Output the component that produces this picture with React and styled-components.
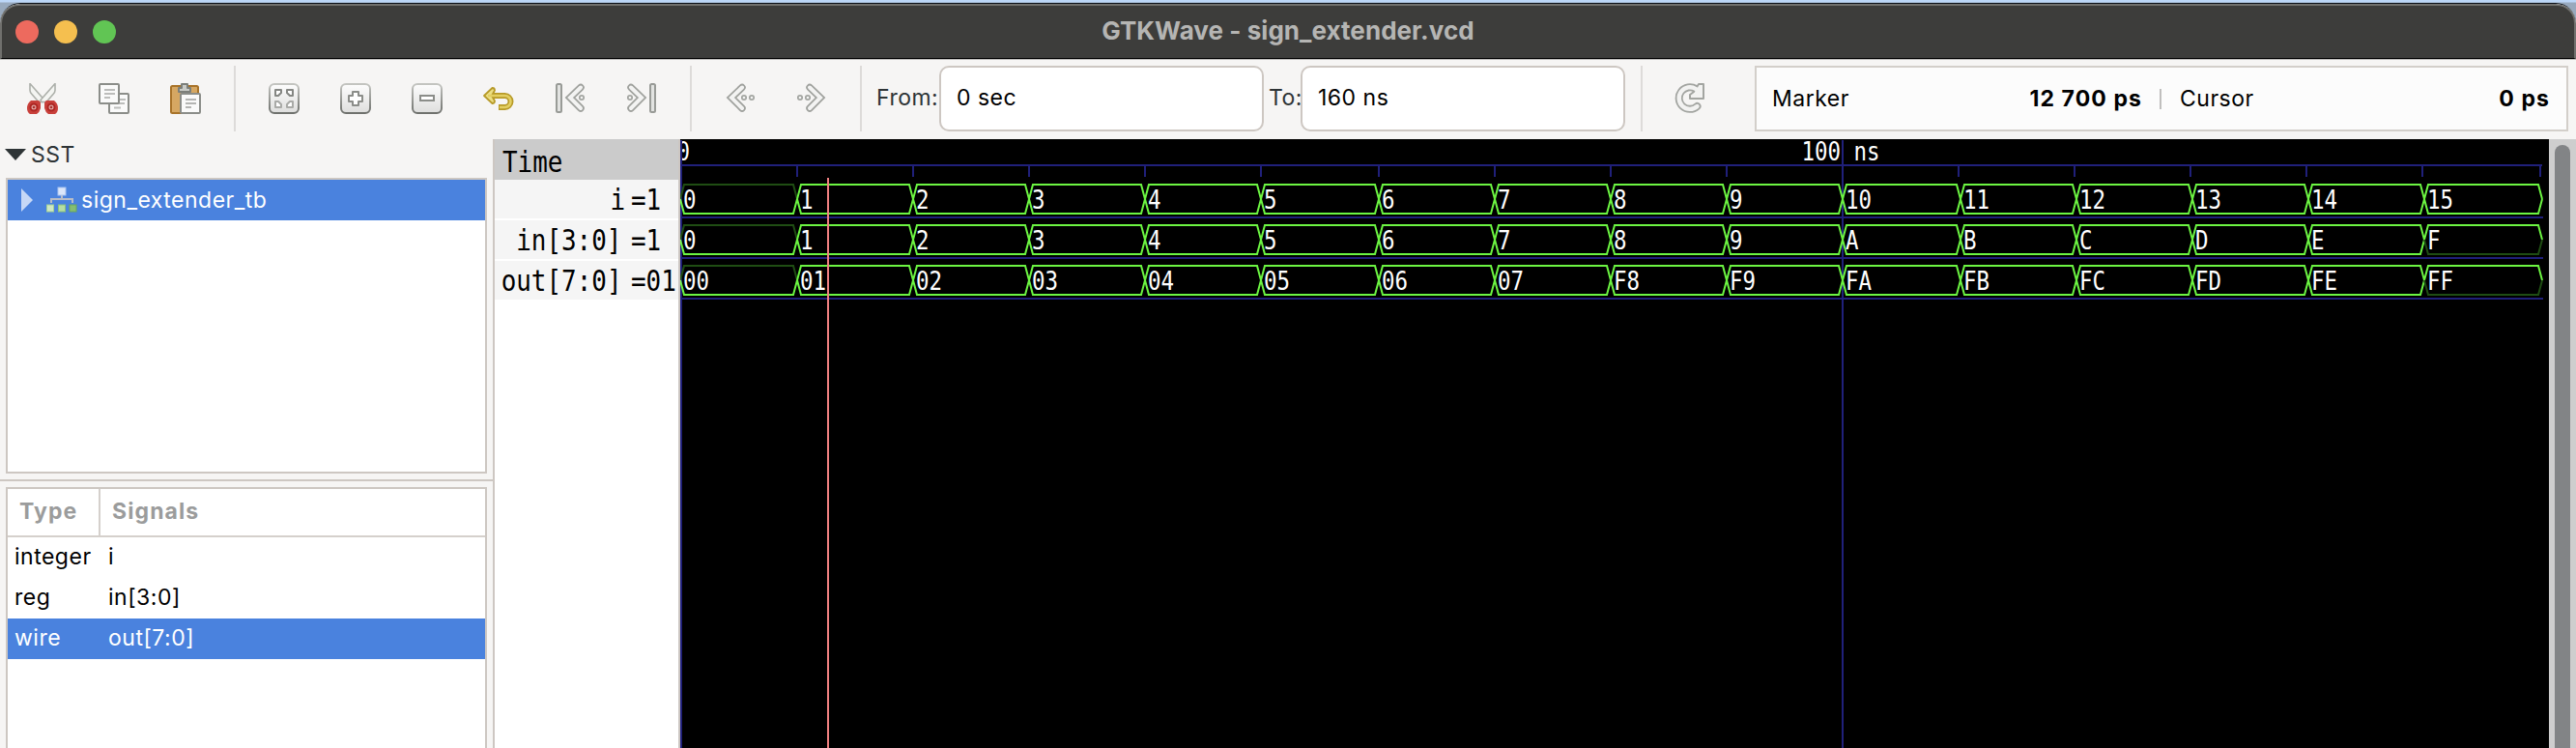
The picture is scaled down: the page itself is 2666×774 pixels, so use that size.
import React from "react";
import styled, { createGlobalStyle } from "styled-components";

const Global = createGlobalStyle`
  * { box-sizing: border-box; }
  body { margin: 0; overflow: hidden; background: #b9d2f2; }
`;

const UI = `Inter, "Open Sans", sans-serif`;
const MONO = `"DejaVu Sans Mono", monospace`;
const EDGE = "#cdc7c2";
const SQUEEZE = 0.864;

const Desktop = styled.div`
  height: 774px;
  padding-top: 3px;
  background: linear-gradient(#bcd7f8 0 2px, #98a9bd 3px);
  font-family: ${UI};
  font-size: 23px;
  letter-spacing: 0.5px;
  color: #000;
`;
const Window = styled.div`
  height: 771px;
  display: flex;
  flex-direction: column;
  background: #f6f5f4;
  border-top: 1px solid #10151c;
  border-radius: 21px 21px 0 0;
  overflow: hidden;
`;
const TitleBar = styled.header`
  height: 57px;
  flex: none;
  display: grid;
  grid-template-columns: 1fr auto 1fr;
  align-items: center;
  padding: 0 14px;
  background: #3d3d3b;
  border: 2px solid #70706d;
  border-bottom: 1px solid #000;
  border-radius: 20px 20px 0 0;
`;
const Lights = styled.div`
  display: flex;
  gap: 16px;
`;
const Light = styled.span`
  width: 24px;
  height: 24px;
  border-radius: 50%;
  background: ${(p) => p.$color};
`;
const Title = styled.h1`
  margin: 0;
  padding-bottom: 3px;
  font-size: 26px;
  line-height: 30px;
  font-weight: 700;
  letter-spacing: 0.05px;
  color: #b5b5b3;
`;
const Toolbar = styled.div`
  height: 83px;
  flex: none;
  display: flex;
  padding: 6px 8px 8px 7px;
  border-top: 1px solid #bdbbb9;
`;
const ToolButton = styled.div`
  width: 74px;
  flex: none;
  display: flex;
  align-items: center;
  justify-content: center;
`;
const Gap = styled.div`
  flex: none;
  width: ${(p) => p.$w}px;
`;
const Divider = styled.div`
  flex: none;
  width: 2px;
  height: 68px;
  margin: 0 ${(p) => p.$r}px 0 ${(p) => p.$l}px;
  background: #dddbd9;
`;
const FieldLabel = styled.label`
  flex: none;
  width: ${(p) => p.$w}px;
  line-height: 67px;
  white-space: nowrap;
  color: #2e3436;
`;
const Field = styled.div`
  flex: none;
  width: 336px;
  height: 68px;
  padding-left: 16px;
  line-height: 63px;
  background: #fff;
  border: 2px solid ${EDGE};
  border-radius: 10px;
`;
const Readout = styled.div`
  flex: none;
  width: 842px;
  height: 68px;
  display: flex;
  align-items: center;
  padding: 0 17px 0 16px;
  background: #fcfcfc;
  border: 2px solid #d3cfca;
`;
const Reading = styled.div`
  flex: none;
  width: ${(p) => p.$w}px;
  padding-bottom: 1px;
  display: flex;
  justify-content: space-between;
  white-space: nowrap;
  b { letter-spacing: 1.1px; }
`;
const ReadoutRule = styled.div`
  width: 2px;
  height: 21px;
  margin: 0 19px 0 18px;
  background: #c0bfbe;
`;
const Body = styled.div`
  flex: 1;
  min-height: 0;
  display: flex;
`;
const Sidebar = styled.aside`
  width: 510px;
  flex: none;
  display: flex;
  flex-direction: column;
`;
const Expander = styled.div`
  height: 40px;
  flex: none;
  display: flex;
  align-items: center;
  gap: 5px;
  padding: 0 0 9px 5px;
  color: #2e3436;
`;
const Panel = styled.section`
  margin: 0 6px;
  flex: ${(p) => (p.$h ? "none" : "1")};
  height: ${(p) => (p.$h ? p.$h + "px" : "auto")};
  background: #fff;
  border: 2px solid ${EDGE};
  border-bottom-width: ${(p) => (p.$h ? 2 : 0)}px;
`;
const Paned = styled.div`
  height: 2px;
  flex: none;
  margin: 6px 0;
  background: ${EDGE};
`;
const TreeRow = styled.div`
  height: 42px;
  display: flex;
  align-items: center;
  padding-left: 14px;
  background: #4a82de;
  color: #fff;
`;
const TreeIcon = styled.span`
  display: flex;
  width: 32px;
  margin: 0 4px 0 14px;
`;
const HeadRow = styled.div`
  display: flex;
  height: 50px;
  line-height: 47px;
  border-bottom: 2px solid #d5d0cc;
  font-weight: 700;
  letter-spacing: 1.1px;
  color: #9b9c9c;
`;
const HeadCell = styled.div`
  width: ${(p) => p.$w || "auto"};
  padding-left: 12px;
  border-right: ${(p) => (p.$w ? "2px solid #d5d0cc" : "none")};
`;
const ListRow = styled.div`
  display: flex;
  height: 42px;
  line-height: 41px;
  padding-left: 7px;
  color: ${(p) => (p.$selected ? "#fff" : "#000")};
  background: ${(p) => (p.$selected ? "#4a82de" : "#fff")};
`;
const TypeCell = styled.div`
  width: 97px;
`;
const Names = styled.section`
  width: 194px;
  flex: none;
  background: #fff;
  border-left: 2px solid ${EDGE};
  border-right: 2px solid ${EDGE};
  font-family: ${MONO};
  font-size: 30px;
  letter-spacing: 0;
`;
const MonoText = styled.span`
  display: inline-block;
  flex: none;
  white-space: pre;
  transform: scaleX(${SQUEEZE});
  transform-origin: ${(p) => p.$origin || "left"} center;
`;
const TimeHead = styled.div`
  height: 42px;
  padding: 3px 0 0 8px;
  line-height: 42px;
  background: #cbcbcb;
`;
const NameRow = styled.div`
  display: flex;
  height: 40px;
  margin-bottom: 2px;
  line-height: 42px;
  overflow: hidden;
  background: #f5f5f5;
`;
const NameCell = styled.div`
  width: 136px;
  flex: none;
  display: flex;
  justify-content: flex-end;
  padding-right: ${(p) => (p.$bracketed ? 5 : 1)}px;
`;
const ValueCell = styled.div`
  width: 54px;
  padding-left: 5px;
  display: flex;
`;
const Waves = styled.svg`
  flex: none;
  width: 1934px;
  height: 630px;
  display: block;
  background: #000;
  font-family: ${MONO};
  font-size: 26px;
  letter-spacing: 0;
`;
const ScrollTrack = styled.div`
  flex: 1;
  padding: 6px 6px 0;
  background: #cecece;
`;
const ScrollThumb = styled.div`
  height: 700px;
  border-radius: 8px;
  background: #828486;
`;

const Icon = ({ children }) => (
  <svg width="32" height="32" viewBox="0 0 32 32" fill="none">
    <defs>
      <linearGradient id="key" x1="0" y1="0" x2="0" y2="1">
        <stop offset="0" stopColor="#fdfdfd" />
        <stop offset="1" stopColor="#dededd" />
      </linearGradient>
      <linearGradient id="keyEdge" x1="0" y1="0" x2="0" y2="1">
        <stop offset="0" stopColor="#c4c5c1" />
        <stop offset="1" stopColor="#6f716d" />
      </linearGradient>
    </defs>
    {children}
  </svg>
);

const CutIcon = () => (
  <Icon>
    <path d="M3 0.5v7q0 2 2 4l7 8 5 0 1-2z" fill="#f4f5f2" stroke="#adb0aa" strokeWidth="1.6" strokeLinejoin="round" />
    <path d="M29 0.5v7q0 2-2 4l-7 8-5 0-1-2z" fill="#f4f5f2" stroke="#adb0aa" strokeWidth="1.6" strokeLinejoin="round" />
    <path d="M4 18h8q2 1 2 3v5q-1 4-4 6H3q-3-2-3-6 0-5 4-8zM28 18h-8q-2 1-2 3v5q1 4 4 6h7q3-2 3-6 0-5-4-8z" fill="#c8403b" />
    <circle cx="7" cy="25" r="3.5" fill="#e3aaa6" stroke="#ad2522" strokeWidth="2" />
    <circle cx="25" cy="25" r="3.5" fill="#e3aaa6" stroke="#ad2522" strokeWidth="2" />
    <circle cx="7" cy="25" r="1.3" fill="#a8302c" />
    <circle cx="25" cy="25" r="1.3" fill="#a8302c" />
  </Icon>
);
const CopyIcon = () => (
  <Icon>
    <rect x="11" y="11" width="20" height="20" rx="1" fill="#fafafa" stroke="#8b8d89" strokeWidth="2" />
    <path d="M20 17h8M20 21h7M16 25.500h7" stroke="#bcbdbb" strokeWidth="2" />
    <rect x="1" y="1" width="20" height="20" rx="1" fill="#fafafa" stroke="#8b8d89" strokeWidth="2" />
    <path d="M6 7h11M6 11h11M6 15h6" stroke="#bcbdbb" strokeWidth="2" />
  </Icon>
);
const PasteIcon = () => (
  <Icon>
    <rect x="1" y="3" width="28" height="28" rx="1.5" fill="#d6a762" stroke="#a87329" strokeWidth="2" />
    <path d="M12 1h6v4h3v4H9V5h3z" fill="#c9cbc7" stroke="#7c7f7a" strokeWidth="2" strokeLinejoin="round" />
    <rect x="11" y="11" width="20" height="20" rx="1" fill="#fafafa" stroke="#8b8d89" strokeWidth="2" />
    <path d="M16 17h11M16 21h11M16 25h6" stroke="#b4b5b3" strokeWidth="2" />
  </Icon>
);
const Key = ({ children }) => (
  <Icon>
    <rect x="1" y="1" width="30" height="30" rx="5" fill="url(#key)" stroke="url(#keyEdge)" strokeWidth="2" />
    {children}
  </Icon>
);
const FitIcon = () => (
  <Key>
    <g strokeWidth="2" fill="#fff" strokeLinejoin="round" stroke="#858783">
      <path d="M7 7h6v3l-3 3H7z" />
      <path d="M25 7h-6v3l3 3h3z" />
      <path d="M7 25h6v-3l-3-3H7z" stroke="#a9aaa7" />
      <path d="M25 25h-6v-3l3-3h3z" stroke="#a9aaa7" />
    </g>
  </Key>
);
const ZoomInIcon = () => (
  <Key>
    <path d="M13 9h6v4h4v6h-4v4h-6v-4H9v-6h4z" fill="#fff" stroke="#8b8d89" strokeWidth="2" strokeLinejoin="round" />
  </Key>
);
const ZoomOutIcon = () => (
  <Key>
    <path d="M9 13h14v5H9z" fill="#fff" stroke="#8b8d89" strokeWidth="2" />
  </Key>
);
const UndoIcon = () => (
  <Icon>
    <path d="M16 25h6.500a6 6 0 0 0 0-12H6" stroke="#b79a28" strokeWidth="6" />
    <path d="M1 13l8.500-8q2.500 0 2.500 2.500l-3 5.500 3 5.500q0 2.500-2.500 2.500z" fill="#ecdf86" stroke="#b79a28" strokeWidth="1.8" strokeLinejoin="round" />
    <path d="M17 25h5.500a6 6 0 0 0 0-12H5" stroke="#e3cf62" strokeWidth="2.6" />
  </Icon>
);
const Arrow = () => (
  <>
    <path d="M25 4.500L14 15l11 11" stroke="#a0a29e" strokeWidth="7.5" strokeLinecap="round" />
    <path d="M25 4.500L14 15l11 11" stroke="#f3f3f2" strokeWidth="4" strokeLinecap="round" />
  </>
);
const Dot = ({ x }) => <circle cx={x} cy="15" r="2.2" fill="#f4f4f3" stroke="#a3a5a1" strokeWidth="1.7" />;
const FirstIcon = ({ flip }) => (
  <Icon>
    <g transform={flip ? "translate(32 0) scale(-1 1)" : undefined}>
      <rect x="2" y="1" width="5" height="29" rx="1.5" fill="#e2e3e1" stroke="#999b97" strokeWidth="2" />
      <g transform="translate(2 0)"><Arrow /></g>
      <Dot x={28} />
    </g>
  </Icon>
);
const StepIcon = ({ flip }) => (
  <Icon>
    <g transform={flip ? "translate(32 0) scale(-1 1)" : undefined}>
      <g transform="translate(-7 0)"><Arrow /></g>
      <Dot x={20} />
      <Dot x={28} />
    </g>
  </Icon>
);
const ReloadIcon = () => (
  <Icon>
    <path d="M23.500 24A11.300 11.300 0 1 1 22 6" stroke="#a3a5a1" strokeWidth="8" strokeLinecap="round" />
    <path d="M30 1v15H16v-4l4-3 5-8z" fill="#f2f2f1" stroke="#a3a5a1" strokeWidth="2" strokeLinejoin="round" />
    <path d="M23.500 24A11.300 11.300 0 1 1 22 6l2 2" stroke="#f2f2f1" strokeWidth="4.4" strokeLinecap="round" />
  </Icon>
);
const TreeGlyph = () => (
  <svg width="32" height="28" viewBox="0 0 32 28">
    <path d="M5 17v-4h22v4M16 9v4" fill="none" stroke="#b9bdc6" strokeWidth="2" />
    <rect x="12" y="1" width="8" height="8" fill="#dbe6fa" stroke="#a9c3f0" />
    <rect x="0.5" y="19" width="7" height="7" fill="#cfe8c4" stroke="#a3d193" />
    <rect x="12.5" y="19" width="7" height="7" fill="#b5dda4" stroke="#8cc47a" />
    <rect x="24" y="19" width="7" height="7" fill="#85bd72" stroke="#6aa95a" />
  </svg>
);

const EDGES = [0, 121, 241, 361, 481, 601, 723, 843, 963, 1083, 1203, 1325, 1445, 1565, 1685, 1805, 1927];
const TICKS = [1, 121, 241, 361, 481, 601, 723, 843, 963, 1083, 1203, 1323, 1443, 1563, 1683, 1803, 1925];
const HEX = "0123456789ABCDEF".split("");
const SIGNALS = [
  { name: "i", now: "1", values: HEX.map((_, n) => String(n)), lastFull: false },
  { name: "in[3:0]", now: "1", values: HEX, lastFull: true },
  { name: "out[7:0]", now: "01", values: HEX.map((h, n) => (n < 8 ? "0" : "F") + h), lastFull: true },
];
const GREEN = "#6cf542";
const DIM = "#1f4d13";
const GRID = "#20207a";

const WaveText = ({ x, y, children }) => (
  <text transform={`translate(${x} ${y}) scale(${SQUEEZE} 1)`} fill="#fff" xmlSpace="preserve">
    {children}
  </text>
);
const BusSegment = ({ from, to, mid, text, dimTop, dimBottom }) => (
  <g fill="none" strokeWidth="2">
    <path d={`M${from} ${mid}L${from + 4} ${mid - 15}H${to - 4}L${to} ${mid}`} stroke={dimTop ? DIM : GREEN} />
    <path d={`M${from} ${mid}L${from + 4} ${mid + 15}H${to - 4}L${to} ${mid}`} stroke={dimBottom ? DIM : GREEN} />
    <WaveText x={from + 3} y={mid + 10}>{text}</WaveText>
  </g>
);
const WaveView = () => (
  <Waves viewBox="0 0 1934 630">
    <WaveText x={-3.5} y={22}>0</WaveText>
    <WaveText x={1160.5} y={22}>100 ns</WaveText>
    <g stroke={GRID} strokeWidth="2">
      <path d="M1 27H1927" />
      {TICKS.map((x) => <path key={x} d={`M${x} 28V39`} />)}
      <path d="M1 1V630M1203 1V630" />
      {SIGNALS.map((s, r) => <path key={s.name} d={`M1 ${81 + r * 42}H1928`} />)}
    </g>
    {SIGNALS.map((s, r) =>
      s.values.map((v, n) => (
        <BusSegment
          key={s.name + n}
          from={EDGES[n]}
          to={EDGES[n + 1]}
          mid={62 + r * 42}
          text={v}
          dimTop={n === 0}
          dimBottom={n === 15 && s.lastFull}
        />
      ))
    )}
    <path d="M153 40V630" stroke="#f08080" strokeWidth="2" />
  </Waves>
);

export default function App() {
  return (
    <Desktop>
      <Global />
      <Window>
        <TitleBar>
          <Lights>
            <Light $color="#ed6a5e" />
            <Light $color="#f5bf4f" />
            <Light $color="#61c554" />
          </Lights>
          <Title>GTKWave - sign_extender.vcd</Title>
          <span />
        </TitleBar>
        <Toolbar>
          <ToolButton><CutIcon /></ToolButton>
          <ToolButton><CopyIcon /></ToolButton>
          <ToolButton><PasteIcon /></ToolButton>
          <Divider $l={13} $r={13} />
          <ToolButton><FitIcon /></ToolButton>
          <ToolButton><ZoomInIcon /></ToolButton>
          <ToolButton><ZoomOutIcon /></ToolButton>
          <ToolButton><UndoIcon /></ToolButton>
          <ToolButton><FirstIcon /></ToolButton>
          <ToolButton><FirstIcon flip /></ToolButton>
          <Divider $l={13} $r={13} />
          <ToolButton><StepIcon /></ToolButton>
          <ToolButton><StepIcon flip /></ToolButton>
          <Divider $l={13} $r={15} />
          <FieldLabel $w={65}>From:</FieldLabel>
          <Field>0 sec</Field>
          <Gap $w={5} />
          <FieldLabel $w={33}>To:</FieldLabel>
          <Field>160 ns</Field>
          <Divider $l={16} $r={12} />
          <ToolButton><ReloadIcon /></ToolButton>
          <Gap $w={30} />
          <Readout>
            <Reading $w={383}><span>Marker</span><b>12 700 ps</b></Reading>
            <ReadoutRule />
            <Reading $w={383}><span>Cursor</span><b>0 ps</b></Reading>
          </Readout>
        </Toolbar>
        <Body>
          <Sidebar>
            <Expander>
              <svg width="22" height="12"><path d="M0 0H22L11 12z" fill="#2e3436" /></svg>
              <span>SST</span>
            </Expander>
            <Panel $h={306}>
              <TreeRow>
                <svg width="12" height="24"><path d="M0 0L12 12 0 24z" fill="#c6d8f6" /></svg>
                <TreeIcon><TreeGlyph /></TreeIcon>
                <span>sign_extender_tb</span>
              </TreeRow>
            </Panel>
            <Paned />
            <Panel>
              <HeadRow>
                <HeadCell $w="96px">Type</HeadCell>
                <HeadCell>Signals</HeadCell>
              </HeadRow>
              <ListRow><TypeCell>integer</TypeCell>i</ListRow>
              <ListRow><TypeCell>reg</TypeCell>in[3:0]</ListRow>
              <ListRow $selected><TypeCell>wire</TypeCell>out[7:0]</ListRow>
            </Panel>
          </Sidebar>
          <Names>
            <TimeHead><MonoText>Time</MonoText></TimeHead>
            {SIGNALS.map((s) => (
              <NameRow key={s.name}>
                <NameCell $bracketed={s.name.endsWith("]")}>
                  <MonoText $origin="right">{s.name}</MonoText>
                </NameCell>
                <ValueCell><MonoText>{"=" + s.now}</MonoText></ValueCell>
              </NameRow>
            ))}
          </Names>
          <WaveView />
          <ScrollTrack><ScrollThumb /></ScrollTrack>
        </Body>
      </Window>
    </Desktop>
  );
}
